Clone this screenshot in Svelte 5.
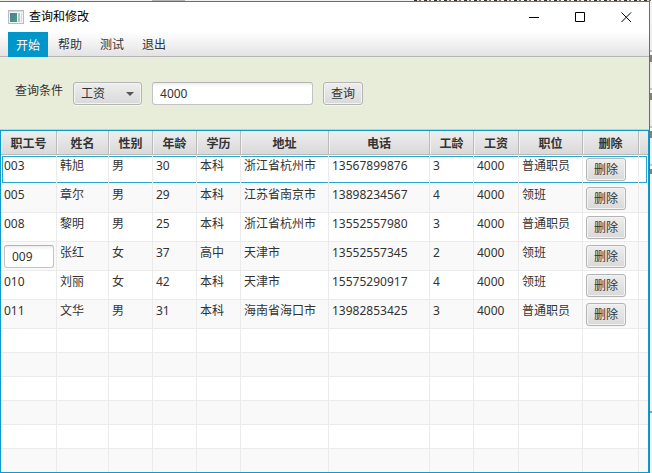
<script>
  const menus = ['开始', '帮助', '测试', '退出'];
  const columns = [
    { title: '职工号', width: 56 },
    { title: '姓名', width: 52 },
    { title: '性别', width: 44 },
    { title: '年龄', width: 44 },
    { title: '学历', width: 44 },
    { title: '地址', width: 88 },
    { title: '电话', width: 101 },
    { title: '工龄', width: 44 },
    { title: '工资', width: 45 },
    { title: '职位', width: 64 },
    { title: '删除', width: 56 }
  ];
  const staff = [
    ['003', '韩旭', '男', '30', '本科', '浙江省杭州市', '13567899876', '3', '4000', '普通职员'],
    ['005', '章尔', '男', '29', '本科', '江苏省南京市', '13898234567', '4', '4000', '领班'],
    ['008', '黎明', '男', '25', '本科', '浙江省杭州市', '13552557980', '3', '4000', '普通职员'],
    ['009', '张红', '女', '37', '高中', '天津市', '13552557345', '2', '4000', '领班'],
    ['010', '刘丽', '女', '42', '本科', '天津市', '15575290917', '4', '4000', '领班'],
    ['011', '文华', '男', '31', '本科', '海南省海口市', '13982853425', '3', '4000', '普通职员']
  ];
  const emptyRows = [0, 1, 2, 3, 4, 5];
  let activeMenu = $state('开始');
  let selected = $state('003');
  let editing = '009';
  let field = $state('工资');
  let query = $state('4000');
</script>

<div class="desktop">
  <main class="window">
    <header class="titlebar">
      <svg class="app-icon" width="16" height="14" viewBox="0 0 16 14" aria-hidden="true">
        <defs>
          <linearGradient id="pane" x1="0" y1="0" x2="1" y2="1">
            <stop offset="0" stop-color="#4a79a8" />
            <stop offset="1" stop-color="#48a36d" />
          </linearGradient>
        </defs>
        <rect x=".5" y=".5" width="15" height="13" fill="#f3f4f5" stroke="#b9bcbf" />
        <rect x="1" y="1" width="14" height="1" fill="#d8dadc" />
        <rect x="2" y="3" width="7" height="9" fill="url(#pane)" />
        <rect x="10" y="3" width="2" height="9" fill="#b9c5cc" />
        <rect x="13" y="3" width="1" height="9" fill="#d3d9dd" />
      </svg>
      <h1>查询和修改</h1>
      <div class="controls">
        <button aria-label="最小化"><svg width="11" height="11" viewBox="0 0 11 11"><path d="M0 5.5h10" /></svg></button>
        <button aria-label="最大化"><svg width="11" height="11" viewBox="0 0 11 11"><path d="M.5.5h9v9h-9z" /></svg></button>
        <button aria-label="关闭"><svg width="11" height="11" viewBox="0 0 11 11"><path d="M.5.5l9.500 9.500M10 .5L.5 10" /></svg></button>
      </div>
    </header>

    <nav class="menubar">
      {#each menus as item}
        <button class:active={item === activeMenu} onclick={() => (activeMenu = item)}>{item}</button>
      {/each}
    </nav>

    <form class="search" onsubmit={(e) => e.preventDefault()}>
      <label for="field">查询条件</label>
      <div class="combo">
        <select id="field" class="control" bind:value={field}>
          <option>工资</option>
          <option>姓名</option>
          <option>职位</option>
        </select>
        <svg width="8" height="4" viewBox="0 0 8 4" aria-hidden="true"><path d="M0 0h8L4 4z" fill="#555" /></svg>
      </div>
      <input class="text query" aria-label="查询内容" bind:value={query} />
      <button class="control">查询</button>
    </form>

    <section class="grid">
      <table>
        <colgroup>
          {#each columns as c}<col style:width="{c.width}px" />{/each}
          <col />
        </colgroup>
        <thead>
          <tr>
            {#each columns as c}<th scope="col">{c.title}</th>{/each}
            <th aria-hidden="true"></th>
          </tr>
        </thead>
        <tbody>
          {#each staff as person}
            <tr class:selected={person[0] === selected} onclick={() => (selected = person[0])}>
              {#each person as value, i}
                <td>
                  {#if i === 0 && value === editing}
                    <input class="text" aria-label="职工号" {value} />
                  {:else}{value}{/if}
                </td>
              {/each}
              <td><button class="control">删除</button></td>
              <td></td>
            </tr>
          {/each}
          {#each emptyRows as row (row)}
            <tr class="empty">
              {#each columns as c}<td></td>{/each}
              <td></td>
            </tr>
          {/each}
        </tbody>
      </table>
    </section>
  </main>
</div>

<style>
  :global(body) {
    margin: 0;
  }
  .desktop {
    box-sizing: border-box;
    min-height: 100vh;
    display: flex;
    padding: 1px 2px 0 0;
    background:
      linear-gradient(#6aa5d8, #6aa5d8) right 411px / 2px 2px no-repeat,
      repeating-linear-gradient(#eee 0 26px, #c4c4c4 26px 28px, #fafafa 28px 31px, #85807a 31px 38px) right 24px / 2px 150px no-repeat,
      repeating-linear-gradient(90deg, #333 0 3px, #e8e2d8 3px 5px, #776655 5px 7px, #fff 7px 10px) right top / 238px 1px no-repeat,
      linear-gradient(#b5b5b5, #b5b5b5) 152px 0 / 33px 1px no-repeat,
      #f2f2f2;
    font: 12px/16px "Noto Sans", "Noto Sans CJK SC", sans-serif;
    color: #333;
  }
  .window {
    box-sizing: border-box;
    flex: 1;
    min-width: 0;
    display: flex;
    flex-direction: column;
    border-top: 1px solid #1f82c6;
    border-right: 1px solid #1f82c6;
    background: #fff;
  }
  button,
  input,
  select {
    box-sizing: border-box;
    margin: 0;
    font: inherit;
    color: inherit;
  }
  .titlebar {
    display: flex;
    align-items: center;
    height: 30px;
    padding-left: 8px;
    color: #000;
  }
  h1 {
    flex: 1;
    margin: 0 0 0 5px;
    font-size: 12px;
    line-height: 18px;
    font-weight: 400;
  }
  .controls {
    display: flex;
    align-self: stretch;
  }
  .controls button {
    display: flex;
    align-items: center;
    justify-content: center;
    width: 46px;
    padding: 0;
    border: 0;
    background: none;
  }
  .controls path {
    fill: none;
    stroke: #000;
  }
  .menubar {
    display: flex;
    gap: 2px;
    padding-left: 8px;
    border-bottom: 1px solid #b5b5b5;
    background: linear-gradient(#fff, #e3e3e3);
  }
  .menubar button {
    height: 24px;
    padding: 2px 8px 0;
    border: 0;
    background: none;
  }
  .menubar .active {
    height: 25px;
    margin-bottom: -1px;
    background: #0096c9;
    color: #fff;
  }
  .search {
    display: flex;
    align-items: flex-start;
    gap: 10px;
    padding: 25px 15px 24px;
    border-bottom: 1px solid #b5d6cf;
    background: #e8edda;
  }
  label {
    line-height: 18px;
  }
  .control {
    height: 23px;
    padding: 0 7px;
    border: 1px solid #b4b4b4;
    border-radius: 3px;
    background: linear-gradient(#eee, #d9d9d9);
    box-shadow: inset 0 0 0 1px #f3f3f3, 0 1px #f6f6f6;
    line-height: 20px;
  }
  .combo {
    display: grid;
    align-items: center;
  }
  .combo select {
    grid-area: 1 / 1;
    width: 69px;
    appearance: none;
  }
  .combo svg {
    grid-area: 1 / 1;
    justify-self: end;
    margin-right: 8px;
    pointer-events: none;
  }
  .text {
    height: 23px;
    padding: 0 7px;
    border: 1px solid #c3c3c3;
    border-top-color: #b2b2b2;
    border-radius: 3px;
    background: linear-gradient(#eee, #fff 4px);
  }
  .query {
    width: 161px;
  }
  .grid {
    flex: 1;
    border: 1px solid #0e9acb;
    overflow: hidden;
  }
  table {
    width: 100%;
    table-layout: fixed;
    border-spacing: 0;
  }
  th,
  td {
    box-sizing: border-box;
    border-right: 1px solid #ebebeb;
    white-space: nowrap;
  }
  th {
    height: 24px;
    padding: 2px 0 0;
    border-right-color: #bababa;
    border-bottom: 1px solid #bababa;
    background: linear-gradient(#eee, #d9d9d9);
    box-shadow: inset 1px 1px #f3f3f3;
    font-weight: 700;
  }
  td {
    height: 29px;
    padding: 3px 0 0 3px;
    border-bottom: 1px solid #ebebeb;
    vertical-align: top;
  }
  th:last-child,
  td:last-child {
    border-right: 0;
  }
  tbody tr:nth-child(even) {
    background: #f9f9f9;
  }
  .empty td {
    height: 24px;
  }
  .empty:last-child td {
    height: 23px;
    border-bottom: 0;
  }
  .selected td {
    border-bottom-color: #fff;
    box-shadow: inset 0 1px #fff, inset 0 2px #2aa5d0, inset 0 -1px #2aa5d0;
  }
  .selected td:first-child {
    box-shadow: inset 1px 0 #fff, inset 0 1px #fff, inset 0 2px #2aa5d0, inset 0 -1px #2aa5d0, inset 2px 0 #2aa5d0;
  }
  .selected td:last-child {
    border-right: 1px solid #fff;
    box-shadow: inset 0 1px #fff, inset 0 2px #2aa5d0, inset 0 -1px #2aa5d0, inset -1px 0 #2aa5d0;
  }
  td .control,
  td .text {
    display: block;
  }
  td .text {
    width: 50px;
  }
</style>
